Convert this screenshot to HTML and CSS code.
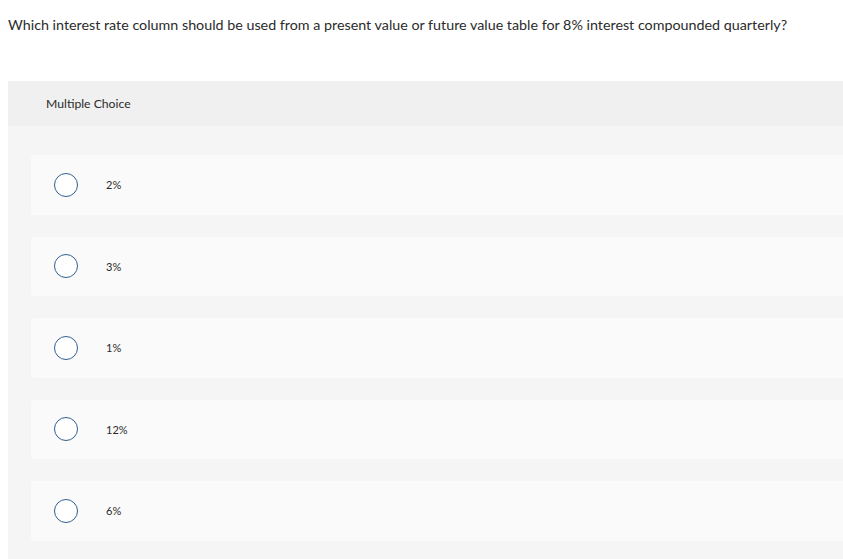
FILE: index.html
```html
<!DOCTYPE html>
<html>
<head>
<meta charset="utf-8">
<link rel="stylesheet" href="styles.css">
</head>
<body>
<div class="question">Which interest rate column should be used from a present value or future value table for 8% interest compounded quarterly?</div>
<div class="panel">
  <div class="panel-header">Multiple Choice</div>
  <div class="panel-body">
    <div class="option"><span class="radio"></span><span class="label">2%</span></div>
    <div class="option"><span class="radio"></span><span class="label">3%</span></div>
    <div class="option"><span class="radio"></span><span class="label">1%</span></div>
    <div class="option"><span class="radio"></span><span class="label">12%</span></div>
    <div class="option"><span class="radio"></span><span class="label">6%</span></div>
  </div>
</div>
</body>
</html>
```
FILE: styles.css
```css
html, body {
  margin: 0;
  padding: 0;
  background: #ffffff;
  font-family: Lato, "Open Sans", sans-serif;
  color: #2b2b2b;
}
.question {
  padding: 16px 0 0 8px;
  font-size: 14.3px;
  line-height: 18px;
  height: 65px;
}
.panel {
  margin-left: 8px;
}
.panel-header {
  background: #f0f0f0;
  height: 45px;
  display: flex;
  align-items: center;
  padding-left: 38px;
  font-size: 12.2px;
}
.panel-body {
  background: #f5f5f5;
  padding: 29px 0 18px 23px;
  display: flex;
  flex-direction: column;
  gap: 22px;
}
.option {
  background: #fafafa;
  height: 59.5px;
  border-radius: 3px 0 0 3px;
  display: flex;
  align-items: center;
  padding-left: 23px;
}
.radio {
  width: 22px;
  height: 22px;
  border: 1.5px solid #2f5f8f;
  border-radius: 50%;
  background: #fff;
  flex: none;
}
.label {
  margin-left: 28px;
  font-size: 11px;
}
```
